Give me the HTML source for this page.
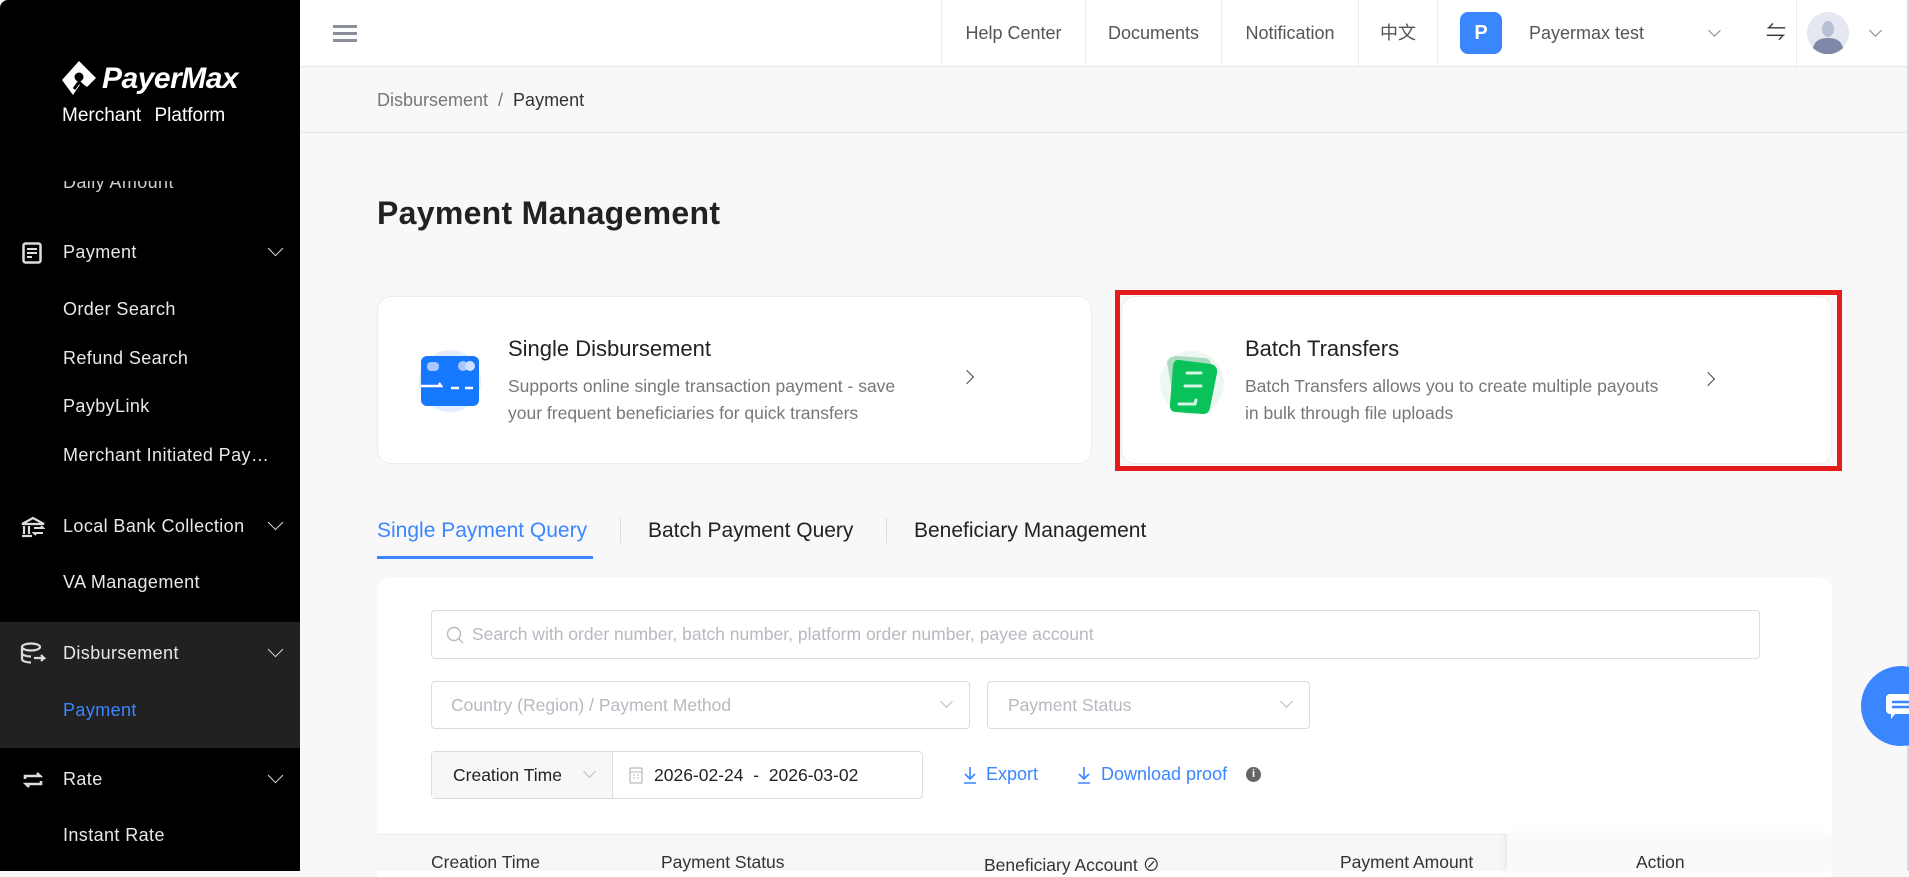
<!DOCTYPE html>
<html><head><meta charset="utf-8"><style>
*{box-sizing:border-box;margin:0;padding:0}
body{width:1909px;height:871px;overflow:hidden;background:#f8f8f8;font-family:"Liberation Sans","Noto Sans CJK SC",sans-serif;position:relative}
.abs{position:absolute}
#sb{left:0;top:0;width:300px;height:871px;background:#000;border-top-left-radius:8px;overflow:hidden}
.si{position:absolute;left:63px;color:#e8e8e8;font-size:18px;letter-spacing:.4px;white-space:nowrap}
.chev{position:absolute;left:270px;width:11px;height:11px;border-right:1.6px solid #ddd;border-bottom:1.6px solid #ddd;transform:rotate(45deg)}
#hd{left:300px;top:0;width:1609px;height:67px;background:#fff;border-bottom:1px solid #e8e8e8}
.hi{position:absolute;top:0;height:67px;line-height:66px;font-size:18px;color:#555;text-align:center;border-left:1px solid #ececec}
.card{background:#fff;border-radius:14px;border:1px solid #ececec}
.ttl{font-size:22px;color:#222}
.desc{font-size:17.5px;color:#777;line-height:27px}
.inp{position:absolute;border:1px solid #dcdce0;border-radius:4px;background:#fff;font-size:17.5px;color:#b8b8c0}
.dv{position:absolute;width:9px;height:9px;border-right:1.3px solid #aaa;border-bottom:1.3px solid #aaa;transform:rotate(45deg)}
.th{position:absolute;top:852px;font-size:17.5px;color:#333}
.tab{position:absolute;top:519px;font-size:21px;color:#222}
</style></head><body>
<div id="sb" class="abs">
 <svg class="abs" style="left:60px;top:60px" width="38" height="38" viewBox="0 0 38 38"><path d="M19 1 L36 18 L27 27 Q22 22 19 26 L13 35 L2 20 Z" fill="#fff"/><circle cx="19" cy="17" r="4.5" fill="#000"/><path d="M14 29 L19 22 L24 27" stroke="#000" stroke-width="3" fill="none"/></svg>
 <div class="abs" style="left:102px;top:62px;color:#fff;font-size:30px;font-weight:bold;font-style:italic;letter-spacing:-.5px">PayerMax</div>
 <div class="abs" style="left:62px;top:105px;color:#fff;font-size:19px;word-spacing:8px">Merchant Platform</div>
 <div class="si" style="top:172px;clip-path:inset(9px 0 0 0);color:#ccc">Daily Amount</div>
 <svg class="abs" style="left:22px;top:242px" width="20" height="22" viewBox="0 0 20 22"><rect x="1.5" y="1.5" width="17" height="19" rx="2" fill="none" stroke="#ddd" stroke-width="2.5"/><path d="M5 7h10M5 11h10M5 15h5" stroke="#ddd" stroke-width="2"/></svg>
 <div class="si" style="top:242px">Payment</div><div class="chev" style="top:243px"></div>
 <div class="si" style="top:299px">Order Search</div>
 <div class="si" style="top:348px">Refund Search</div>
 <div class="si" style="top:396px">PaybyLink</div>
 <div class="si" style="top:445px">Merchant Initiated Pay…</div>
 <svg class="abs" style="left:20px;top:516px" width="26" height="22" viewBox="0 0 26 22"><path d="M2 8 L13 2 L24 8 Z M4 10v8M9 10v8M2 20h10" stroke="#ddd" stroke-width="2.2" fill="none"/><path d="M14 12h9l-2-2M23 17h-9l2 2" stroke="#ddd" stroke-width="2" fill="none"/></svg>
 <div class="si" style="top:516px">Local Bank Collection</div><div class="chev" style="top:517px"></div>
 <div class="si" style="top:572px">VA Management</div>
 <div class="abs" style="left:0;top:622px;width:300px;height:126px;background:#212121"></div>
 <svg class="abs" style="left:20px;top:642px" width="26" height="24" viewBox="0 0 26 24"><ellipse cx="11" cy="5" rx="9" ry="3.5" fill="none" stroke="#ddd" stroke-width="2.2"/><path d="M2 5v12c0 2 4 3.5 9 3.5M2 11c0 2 4 3.5 9 3.5M14 16h10l-3-3M24 16l-3 3" stroke="#ddd" stroke-width="2.2" fill="none"/></svg>
 <div class="si" style="top:643px">Disbursement</div><div class="chev" style="top:644px"></div>
 <div class="si" style="top:700px;color:#3a86ff">Payment</div>
 <svg class="abs" style="left:22px;top:769px" width="22" height="22" viewBox="0 0 22 22"><path d="M3 10V7h15l-3-3M19 12v3H4l3 3" stroke="#ddd" stroke-width="2.6" fill="none"/></svg>
 <div class="si" style="top:769px">Rate</div><div class="chev" style="top:770px"></div>
 <div class="si" style="top:825px">Instant Rate</div>
</div>
<div id="hd" class="abs">
 <div class="abs" style="left:33px;top:25px;width:24px;height:3px;background:#8a8f99;box-shadow:0 7px 0 #8a8f99,0 14px 0 #8a8f99"></div>
 <div class="hi" style="left:641px;width:144px">Help Center</div>
 <div class="hi" style="left:785px;width:136px">Documents</div>
 <div class="hi" style="left:921px;width:137px">Notification</div>
 <div class="hi" style="left:1058px;width:79px">中文</div>
 <div class="hi" style="left:1137px;width:359px;text-align:left">
  <div class="abs" style="left:22px;top:12px;width:42px;height:42px;border-radius:8px;background:#3a86ff;color:#fff;font-weight:bold;font-size:20px;line-height:42px;text-align:center">P</div>
  <div class="abs" style="left:91px;top:0">Payermax test</div>
  <div class="dv" style="left:272px;top:26px;border-color:#888"></div>
  <div class="abs" style="left:328px;top:0;font-size:20px;color:#333">⇋</div>
 </div>
 <div class="hi" style="left:1496px;width:113px">
  <svg class="abs" style="left:10px;top:12px" width="42" height="42" viewBox="0 0 42 42"><circle cx="21" cy="21" r="21" fill="#e5e8f0"/><path d="M6 36 Q8 26 21 26 Q34 26 36 36 A21 21 0 0 1 6 36Z" fill="#7f88a8"/><ellipse cx="21" cy="17" rx="6" ry="8" fill="#b8bfd4"/></svg>
  <div class="dv" style="left:74px;top:26px;border-color:#888"></div>
 </div>
</div>
<div class="abs" style="left:300px;top:132px;width:1609px;height:1px;background:#e6e6e6"></div>
<div class="abs" style="left:1907px;top:0;width:2px;height:871px;background:#d8d8d8"></div>
<div class="abs" style="left:377px;top:90px;font-size:18px;color:#777">Disbursement &nbsp;/ &nbsp;<span style="color:#333">Payment</span></div>
<div class="abs" style="left:377px;top:195px;font-size:32px;font-weight:bold;color:#222;letter-spacing:.3px">Payment Management</div>

<div class="abs card" style="left:377px;top:296px;width:715px;height:168px"></div>
<svg class="abs" style="left:415px;top:346px" width="70" height="70" viewBox="0 0 70 70"><circle cx="35" cy="35" r="31" fill="#e4edfd"/><rect x="6" y="10" width="58" height="50" rx="6" fill="#1677ff"/><rect x="12" y="16" width="12" height="9" rx="4" fill="#a8c8ff"/><circle cx="48" cy="20" r="5" fill="#a8c8ff"/><circle cx="55" cy="20" r="5" fill="#cfe0ff"/><path d="M6 40h20l-2-3M36 42h8M50 42h8" stroke="#fff" stroke-width="2.5" fill="none"/></svg>
<div class="abs ttl" style="left:508px;top:336px">Single Disbursement</div>
<div class="abs desc" style="left:508px;top:373px">Supports online single transaction payment - save<br>your frequent beneficiaries for quick transfers</div>
<div class="abs" style="left:962px;top:372px;width:10px;height:10px;border-right:1.6px solid #444;border-top:1.6px solid #444;transform:rotate(45deg)"></div>

<div class="abs" style="left:1115px;top:290px;width:727px;height:181px;border:5px solid #e41c1c"></div>
<div class="abs card" style="left:1121px;top:296px;width:711px;height:168px"></div>
<svg class="abs" style="left:1155px;top:346px" width="75" height="75" viewBox="0 0 75 75"><circle cx="37" cy="37" r="32" fill="#eef7f1"/><path d="M12 16 Q14 10 22 10 L50 12 Q56 13 56 20 L50 64 L20 62 Z" fill="#a9dcbf"/><path d="M24 14 L56 18 Q63 20 62 27 L55 62 Q54 68 48 68 L20 66 Q14 65 15 58 L18 20 Q19 13 24 14Z" fill="#0ac25a"/><path d="M32 27h14M30 40h16M24 58h16l1-4" stroke="#d3f5e1" stroke-width="3" fill="none" stroke-linecap="round"/></svg>
<div class="abs ttl" style="left:1245px;top:336px">Batch Transfers</div>
<div class="abs desc" style="left:1245px;top:373px">Batch Transfers allows you to create multiple payouts<br>in bulk through file uploads</div>
<div class="abs" style="left:1703px;top:374px;width:10px;height:10px;border-right:1.6px solid #444;border-top:1.6px solid #444;transform:rotate(45deg)"></div>

<div class="tab" style="left:377px;color:#3a86ff">Single Payment Query</div>
<div class="abs" style="left:377px;top:556px;width:216px;height:3px;background:#3a86ff"></div>
<div class="abs" style="left:620px;top:518px;width:1px;height:25px;background:#ddd"></div>
<div class="tab" style="left:648px">Batch Payment Query</div>
<div class="abs" style="left:886px;top:518px;width:1px;height:25px;background:#ddd"></div>
<div class="tab" style="left:914px">Beneficiary Management</div>

<div class="abs" style="left:377px;top:577px;width:1455px;height:300px;background:#fff;border-radius:14px 14px 0 0"></div>
<div class="inp" style="left:431px;top:610px;width:1329px;height:49px">
 <svg class="abs" style="left:14px;top:15px" width="18" height="18" viewBox="0 0 18 18"><circle cx="8" cy="8" r="6.5" fill="none" stroke="#bbb" stroke-width="1.5"/><path d="M13 13l4 4" stroke="#bbb" stroke-width="1.5"/></svg>
 <div class="abs" style="left:40px;top:13px">Search with order number, batch number, platform order number, payee account</div></div>
<div class="inp" style="left:431px;top:681px;width:539px;height:48px"><div class="abs" style="left:19px;top:13px">Country (Region) / Payment Method</div><div class="dv" style="left:510px;top:15px;border-color:#bbb"></div></div>
<div class="inp" style="left:987px;top:681px;width:323px;height:48px"><div class="abs" style="left:20px;top:13px">Payment Status</div><div class="dv" style="left:294px;top:15px;border-color:#bbb"></div></div>
<div class="inp" style="left:431px;top:751px;width:492px;height:48px;color:#222">
 <div class="abs" style="left:0;top:0;width:181px;height:46px;background:#f7f7f8;border-right:1px solid #dcdce0"></div>
 <div class="abs" style="left:21px;top:13px">Creation Time</div><div class="dv" style="left:153px;top:15px;border-color:#bbb"></div>
 <svg class="abs" style="left:197px;top:14px" width="14" height="18" viewBox="0 0 14 18"><rect x="1" y="2" width="12" height="15" rx="1" fill="none" stroke="#bbb" stroke-width="1.3"/><path d="M1 6h12M4 9h2M8 9h2M4 12h2M8 12h2" stroke="#bbb"/></svg>
 <div class="abs" style="left:222px;top:13px">2026-02-24 &nbsp;- &nbsp;2026-03-02</div></div>
<svg class="abs" style="left:962px;top:766px" width="16" height="18" viewBox="0 0 16 18"><path d="M8 1v12M3 8l5 5 5-5M2 17h12" stroke="#3a86ff" stroke-width="1.6" fill="none"/></svg>
<div class="abs" style="left:986px;top:764px;font-size:18px;color:#3a86ff">Export</div>
<svg class="abs" style="left:1076px;top:766px" width="16" height="18" viewBox="0 0 16 18"><path d="M8 1v12M3 8l5 5 5-5M2 17h12" stroke="#3a86ff" stroke-width="1.6" fill="none"/></svg>
<div class="abs" style="left:1101px;top:764px;font-size:18px;color:#3a86ff">Download proof</div>
<div class="abs" style="left:1246px;top:767px;width:15px;height:15px;border-radius:50%;background:#666;color:#fff;font-size:11px;font-weight:bold;text-align:center;line-height:15px">i</div>

<div class="abs" style="left:377px;top:834px;width:1455px;height:37px;background:#f7f7f8;border-top:1px solid #ececec"></div>
<div class="abs" style="left:1507px;top:834px;width:325px;height:37px;background:#fafafa;box-shadow:-4px 0 6px rgba(0,0,0,.05)"></div>
<div class="th" style="left:431px">Creation Time</div>
<div class="th" style="left:661px">Payment Status</div>
<div class="th" style="left:984px">Beneficiary Account ⊘</div>
<div class="th" style="left:1340px">Payment Amount</div>
<div class="th" style="left:1636px">Action</div>

<div class="abs" style="left:1861px;top:666px;width:80px;height:80px;border-radius:50%;background:#3a86ff"></div>
<svg class="abs" style="left:1885px;top:693px" width="24" height="28" viewBox="0 0 24 28"><path d="M5 1h19v20H10l-4 5v-5H5a4 4 0 0 1-4-4V5a4 4 0 0 1 4-4z" fill="#fff"/><path d="M7 9h17M7 14h17" stroke="#3a86ff" stroke-width="2.5"/></svg>
</body></html>
